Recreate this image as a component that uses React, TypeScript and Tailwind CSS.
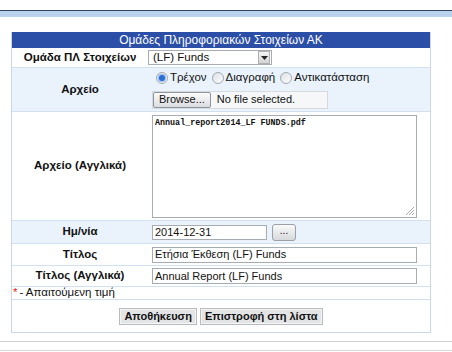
import React from "react";

const font = { fontFamily: '"Liberation Sans", Arial, sans-serif' };

function Radio({ checked, label }: { checked?: boolean; label: string }) {
  return (
    <span className="flex items-center gap-[2px] mr-[5px]">
      <span className="relative w-[12px] h-[12px] rounded-full border border-[#a2a9b1] bg-gradient-to-br from-[#dcdfe3] to-[#ffffff] flex items-center justify-center">
        {checked && <span className="w-[6px] h-[6px] rounded-full bg-[#2a6fd6] shadow-[0_0_1px_1px_#8fb8f0]" />}
      </span>
      <span>{label}</span>
    </span>
  );
}

function Row({
  label,
  children,
  bg = "bg-white",
  h,
}: {
  label: string;
  children: React.ReactNode;
  bg?: string;
  h: string;
}) {
  return (
    <div className={`grid grid-cols-[136px_1fr] border-b border-[#d3e0ee] ${bg} ${h}`}>
      <div className="flex items-center justify-center font-bold text-[11.5px] text-[#111]">{label}</div>
      <div className="flex flex-col justify-center pl-[4px]">{children}</div>
    </div>
  );
}

export default function App() {
  return (
    <div className="w-[452px] h-[352px] bg-white overflow-hidden relative text-[#111]" style={font}>
      <div className="h-[10px]" />
      <div className="h-px bg-[#2f4560]" />
      <div className="h-[6px] bg-[#b9d3ee]" />
      <div className="h-[15px]" />
      <div className="ml-[11px] w-[420px] border border-[#c9d7e6] border-t-0">
        <div className="h-[16px] bg-[#2b4ea7] text-white text-[12px] flex items-center justify-center">
          Ομάδες Πληροφοριακών Στοιχείων ΑΚ
        </div>
        <Row label="Ομάδα ΠΛ Στοιχείων" h="h-[20px]">
          <div className="w-[124px] h-[15px] border border-[#a5acb2] bg-white flex items-center justify-between text-[11.5px] -ml-[4px]">
            <span className="pl-[4px] leading-none">(LF) Funds</span>
            <span className="w-[12px] h-[13px] mr-px bg-gradient-to-b from-[#f4f4f4] to-[#d4d4d4] border border-[#b0b0b0] flex items-center justify-center">
              <svg width="7" height="4" viewBox="0 0 7 4"><path d="M0 0h7L3.5 4z" fill="#222" /></svg>
            </span>
          </div>
        </Row>
        <Row label="Αρχείο" bg="bg-[#eaf3fc]" h="h-[44px]">
          <div className="flex items-center text-[11.5px] pl-[4px] h-[15px]">
            <Radio checked label="Τρέχον" />
            <Radio label="Διαγραφή" />
            <Radio label="Αντικατάσταση" />
          </div>
          <div className="flex items-center mt-[5px] h-[18px] w-[176px] border border-[#d6dade] bg-[#f6f7f8] text-[11px]">
            <span className="h-[16px] px-[5px] flex items-center rounded-[2px] border border-[#8e959c] bg-gradient-to-b from-[#fbfbfb] to-[#dcdde0]">
              Browse...
            </span>
            <span className="ml-[6px]">No file selected.</span>
          </div>
        </Row>
        <Row label="Αρχείο (Αγγλικά)" h="h-[109px]">
          <div className="relative w-[265px] h-[103px] border border-[#a5acb2] bg-white">
            <div className="pl-[2px] pt-[2px] text-[8.4px] leading-[10px] text-[#111]" style={{ fontFamily: '"Liberation Mono", "Courier New", monospace', fontWeight: 600 }}>
              Annual_report2014_LF FUNDS.pdf
            </div>
            <svg className="absolute right-px bottom-px" width="10" height="10" viewBox="0 0 10 10">
              <path d="M9 1L1 9M9 4L4 9M9 7L7 9" stroke="#a8a8a8" strokeWidth="1" />
            </svg>
          </div>
        </Row>
        <Row label="Ημ/νία" bg="bg-[#eaf3fc]" h="h-[23px]">
          <div className="flex items-center gap-[5px]">
            <div className="w-[115px] h-[15px] border border-[#a5acb2] bg-white text-[11px] pl-[2px] flex items-center">2014-12-31</div>
            <div className="w-[24px] h-[17px] rounded-[3px] border border-[#9aa0a6] bg-gradient-to-b from-[#fafafa] to-[#d6d8db] flex items-center justify-center text-[10px] leading-none pb-[3px]">
              ...
            </div>
          </div>
        </Row>
        <Row label="Τίτλος" h="h-[22px]">
          <div className="w-[265px] h-[16px] border border-[#a5acb2] bg-white text-[11px] pl-[2px] flex items-center">Ετήσια Έκθεση (LF) Funds</div>
        </Row>
        <Row label="Τίτλος (Αγγλικά)" h="h-[21px]">
          <div className="w-[265px] h-[16px] border border-[#a5acb2] bg-white text-[11px] pl-[2px] flex items-center">Annual Report (LF) Funds</div>
        </Row>
        <div className="h-[13px] border-b border-[#d3e0ee] flex items-center text-[11.5px] pl-px">
          <span className="text-[#e02020]">*</span>
          <span className="ml-[2px]">- Απαιτούμενη τιμή</span>
        </div>
        <div className="h-[32px] flex items-center justify-center gap-[3px]">
          <span className="h-[17px] px-[4px] flex items-center border border-[#b8bcc0] bg-[#e3e4e6] font-bold text-[11px] shadow-[inset_0_0_0_1px_#f4f4f4]">Αποθήκευση</span>
          <span className="h-[17px] px-[4px] flex items-center border border-[#b8bcc0] bg-[#e3e4e6] font-bold text-[11px] shadow-[inset_0_0_0_1px_#f4f4f4]">Επιστροφή στη λίστα</span>
        </div>
      </div>
      <div className="h-[8px]" />
      <div className="h-px bg-[#d0d0d0]" />
      <div className="h-[8px]" />
      <div className="h-px bg-[#d8d8d8]" />
    </div>
  );
}
